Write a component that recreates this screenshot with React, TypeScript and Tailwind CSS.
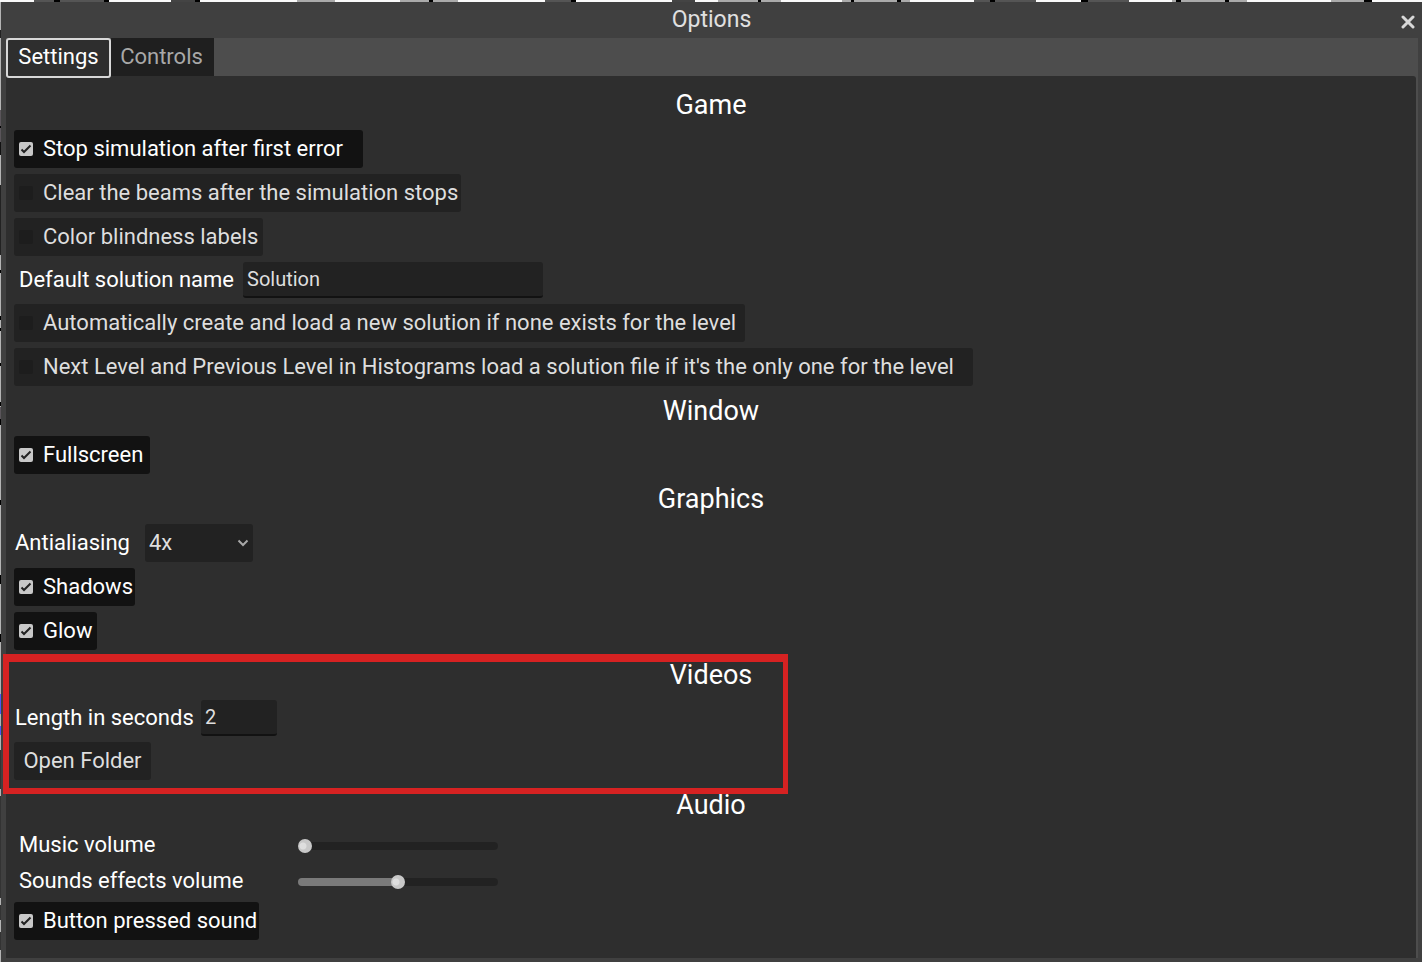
import React, { useState } from 'react';

interface Tile {
  from: number,
  to: number,
  color: string
}

// tiles of the level that stay visible above the window
const topTiles: Tile[] = [
  { from: 34, to: 108, color: '#555' },
  { from: 54, to: 60, color: '#000' },
  { from: 104, to: 109, color: '#000' },
  { from: 171, to: 198, color: '#444' },
  { from: 195, to: 200, color: '#000' },
  { from: 297, to: 335, color: '#aaa' },
  { from: 400, to: 458, color: '#aaa' },
  { from: 429, to: 433, color: '#000' },
  { from: 545, to: 575, color: '#555' },
  { from: 571, to: 576, color: '#000' },
  { from: 672, to: 695, color: '#444' },
  { from: 718, to: 781, color: '#aaa' },
  { from: 758, to: 761, color: '#000' },
  { from: 842, to: 910, color: '#aaa' },
  { from: 851, to: 854, color: '#000' },
  { from: 897, to: 901, color: '#000' },
  { from: 974, to: 1036, color: '#555' },
  { from: 990, to: 995, color: '#000' },
  { from: 1081, to: 1129, color: '#555' },
  { from: 1081, to: 1088, color: '#000' },
  { from: 1172, to: 1247, color: '#aaa' },
  { from: 1176, to: 1181, color: '#000' },
  { from: 1225, to: 1229, color: '#000' },
  { from: 1331, to: 1370, color: '#aaa' },
  { from: 1364, to: 1372, color: '#000' },
]

// and the ones on its left side
const leftTiles: Tile[] = [
  { from: 30, to: 38, color: '#222' },
  { from: 110, to: 150, color: '#5a555a' },
  { from: 126, to: 128, color: '#000' },
  { from: 142, to: 155, color: '#111' },
  { from: 185, to: 255, color: '#222' },
  { from: 270, to: 273, color: '#000' },
  { from: 316, to: 320, color: '#000' },
  { from: 328, to: 331, color: '#000' },
  { from: 363, to: 366, color: '#000' },
  { from: 402, to: 406, color: '#000' },
  { from: 407, to: 419, color: '#5a555a' },
  { from: 419, to: 425, color: '#000' },
  { from: 500, to: 505, color: '#000' },
  { from: 575, to: 584, color: '#000' },
  { from: 634, to: 642, color: '#000' },
  { from: 694, to: 714, color: '#4a55f5' },
  { from: 726, to: 735, color: '#4a55f5' },
  { from: 750, to: 789, color: '#333' },
  { from: 796, to: 898, color: '#333' },
  { from: 905, to: 920, color: '#333' },
  { from: 932, to: 950, color: '#333' },
]

const Backdrop = () => (
  <svg className="absolute inset-0 h-full w-full" aria-hidden="true">
    <rect width="100%" height="100%" fill="#b4b4b4" />
    <rect width="100%" height="2" fill="#fafafa" />
    {topTiles.map(tile => (
      <rect key={tile.from + tile.color} x={tile.from} y="0" width={tile.to - tile.from} height="2" fill={tile.color} />
    ))}
    {leftTiles.map(tile => (
      <rect key={tile.from} x="0" y={tile.from} width="1" height={tile.to - tile.from} fill={tile.color} />
    ))}
  </svg>
)

const Heading = ({ children }: { children: React.ReactNode }) => (
  <h2 className="h-[38px] text-center text-[27px] leading-[38px] text-white">{children}</h2>
)

interface CheckRowProps {
  label: string,
  initial?: boolean,
  width: string
}

const CheckRow = ({ label, initial = false, width }: CheckRowProps) => {
  const [checked, setChecked] = useState<boolean>(initial)

  return (
    <label className={`flex h-[38px] items-center gap-2.5 self-start rounded-[3px] pl-[5px] pr-0.5 whitespace-nowrap ${width} ${checked ? 'bg-[#121212] text-white' : 'bg-[#222] text-[#dedede]'}`}>
      <span className="relative flex">
        <input
          type="checkbox"
          className="size-3.5 appearance-none rounded-[2px] bg-[#1d1d1d] checked:bg-[#c8c8c8]"
          checked={checked}
          onChange={(e) => setChecked(e.target.checked)}
        />
        {checked &&
          <svg viewBox="0 0 14 14" className="pointer-events-none absolute inset-0 size-3.5" fill="none" stroke="#222" strokeWidth="2">
            <path d="M2.5 7.5 L5 10 L11.5 3.5" />
          </svg>
        }
      </span>
      {label}
    </label>
  )
}

const VolumeRow = ({ id, label, initial }: { id: string, label: string, initial: number }) => {
  const [value, setValue] = useState<number>(initial)

  return (
    <div className="flex h-[30px] items-center pl-[5px]">
      <label htmlFor={id} className="w-[279px]">{label}</label>
      <input
        id={id}
        type="range"
        min={0}
        max={100}
        value={value}
        onChange={(e) => setValue(Number(e.target.value))}
        style={{ '--fill': `${value}%` } as React.CSSProperties}
        className="h-[18px] w-[200px] appearance-none bg-transparent pt-0.5 [&::-webkit-slider-runnable-track]:h-2 [&::-webkit-slider-runnable-track]:rounded-full [&::-webkit-slider-runnable-track]:bg-[linear-gradient(to_right,#7a7a7a_var(--fill),#222_var(--fill))] [&::-webkit-slider-thumb]:-mt-[3px] [&::-webkit-slider-thumb]:size-3.5 [&::-webkit-slider-thumb]:appearance-none [&::-webkit-slider-thumb]:rounded-full [&::-webkit-slider-thumb]:bg-[radial-gradient(circle_at_5px_7px,#dedede_3px,#c8c8c8_4px)]"
      />
    </div>
  )
}

const App = () => {
  const [solutionName, setSolutionName] = useState<string>('Solution')
  const [antialiasing, setAntialiasing] = useState<string>('4x')
  const [videoLength, setVideoLength] = useState<string>('2')

  return (
    <div className="relative min-h-screen overflow-hidden pl-px pt-0.5 font-['Roboto','Liberation_Sans',sans-serif] text-[22px] leading-[30px] text-white">
      <Backdrop />
      <div className="relative bg-[#404040] pb-1 pl-[5px] pr-1">
        <header className="flex h-9 items-center">
          <h1 className="flex-1 pl-4 text-center text-[23px] text-[#e0e0e0]">Options</h1>
          <button type="button" aria-label="Close" className="pr-[3px] pt-1">
            <svg viewBox="0 0 14 14" className="size-3.5" fill="none" stroke="#d8d8d8" strokeWidth="3" strokeLinecap="round">
              <path d="M2 2 L12 12 M12 2 L2 12" />
            </svg>
          </button>
        </header>
        <div className="bg-[#4d4d4d] pr-0.5">
          <nav className="flex h-[38px]">
            <button type="button" className="relative z-10 h-10 w-[105px] rounded-[3px] border-2 border-[#d8d8d8] bg-[#2e2e2e] pb-0.5 text-white">Settings</button>
            <button type="button" className="w-[103px] bg-[#1f1f1f] pr-0.5 text-[#a8a8a8]">Controls</button>
          </nav>
          <main className="flex flex-col gap-1.5 rounded-tr-[3px] bg-[#2e2e2e] px-2 pb-[18px] pt-2.5">
            <Heading>Game</Heading>
            <CheckRow label="Stop simulation after first error" initial width="min-w-[349px]" />
            <CheckRow label="Clear the beams after the simulation stops" width="min-w-[447px]" />
            <CheckRow label="Color blindness labels" width="min-w-[249px]" />
            <div className="flex items-center pl-[5px]">
              <label htmlFor="solution-name" className="w-[224px]">Default solution name</label>
              <input
                id="solution-name"
                type="text"
                className="h-9 w-[300px] rounded-[3px] border-b-2 border-[#121212] bg-[#222] px-1 text-[20px] text-[#dedede]"
                value={solutionName}
                onChange={(e) => setSolutionName(e.target.value)}
              />
            </div>
            <CheckRow label="Automatically create and load a new solution if none exists for the level" width="min-w-[731px]" />
            <CheckRow label="Next Level and Previous Level in Histograms load a solution file if it's the only one for the level" width="min-w-[959px]" />

            <Heading>Window</Heading>
            <CheckRow label="Fullscreen" initial width="min-w-[136px]" />

            <Heading>Graphics</Heading>
            <div className="flex items-center pl-px">
              <label htmlFor="antialiasing" className="w-[130px]">Antialiasing</label>
              <div className="relative">
                <select
                  id="antialiasing"
                  className="block h-[38px] w-[108px] appearance-none rounded-[3px] bg-[#222] px-1 text-[#dedede]"
                  value={antialiasing}
                  onChange={(e) => setAntialiasing(e.target.value)}
                >
                  <option>2x</option>
                  <option>4x</option>
                  <option>8x</option>
                </select>
                <svg viewBox="0 0 12 12" className="pointer-events-none absolute right-1 top-[13px] size-3" fill="none" stroke="#a8a8a8" strokeWidth="2">
                  <path d="M1.5 3.5 L6 8 L10.5 3.5" />
                </svg>
              </div>
            </div>
            <CheckRow label="Shadows" initial width="min-w-[121px]" />
            <CheckRow label="Glow" initial width="min-w-[83px]" />

            <section className="relative flex flex-col gap-1.5">
              <Heading>Videos</Heading>
              <div className="flex items-center pl-px">
                <label htmlFor="video-length" className="w-[186px]">Length in seconds</label>
                <input
                  id="video-length"
                  type="text"
                  className="h-9 w-[76px] rounded-[3px] border-b-2 border-[#121212] bg-[#222] px-1 text-[20px] text-[#dedede]"
                  value={videoLength}
                  onChange={(e) => setVideoLength(e.target.value)}
                />
              </div>
              <button type="button" className="h-[38px] min-w-[137px] self-start rounded-[3px] bg-[#222] px-2 text-[#dedede]">Open Folder</button>
              {/* highlight around the video options */}
              <div className="pointer-events-none absolute -bottom-3.5 -left-[11px] -top-0.5 z-10 w-[785px] border-b-[6px] border-l-[6px] border-r-[5px] border-t-8 border-[#d62222]" />
            </section>

            <Heading>Audio</Heading>
            <VolumeRow id="music-volume" label="Music volume" initial={0} />
            <VolumeRow id="effects-volume" label="Sounds effects volume" initial={50} />
            <CheckRow label="Button pressed sound" initial width="min-w-[245px]" />
          </main>
        </div>
      </div>
    </div>
  )
}

export default App
